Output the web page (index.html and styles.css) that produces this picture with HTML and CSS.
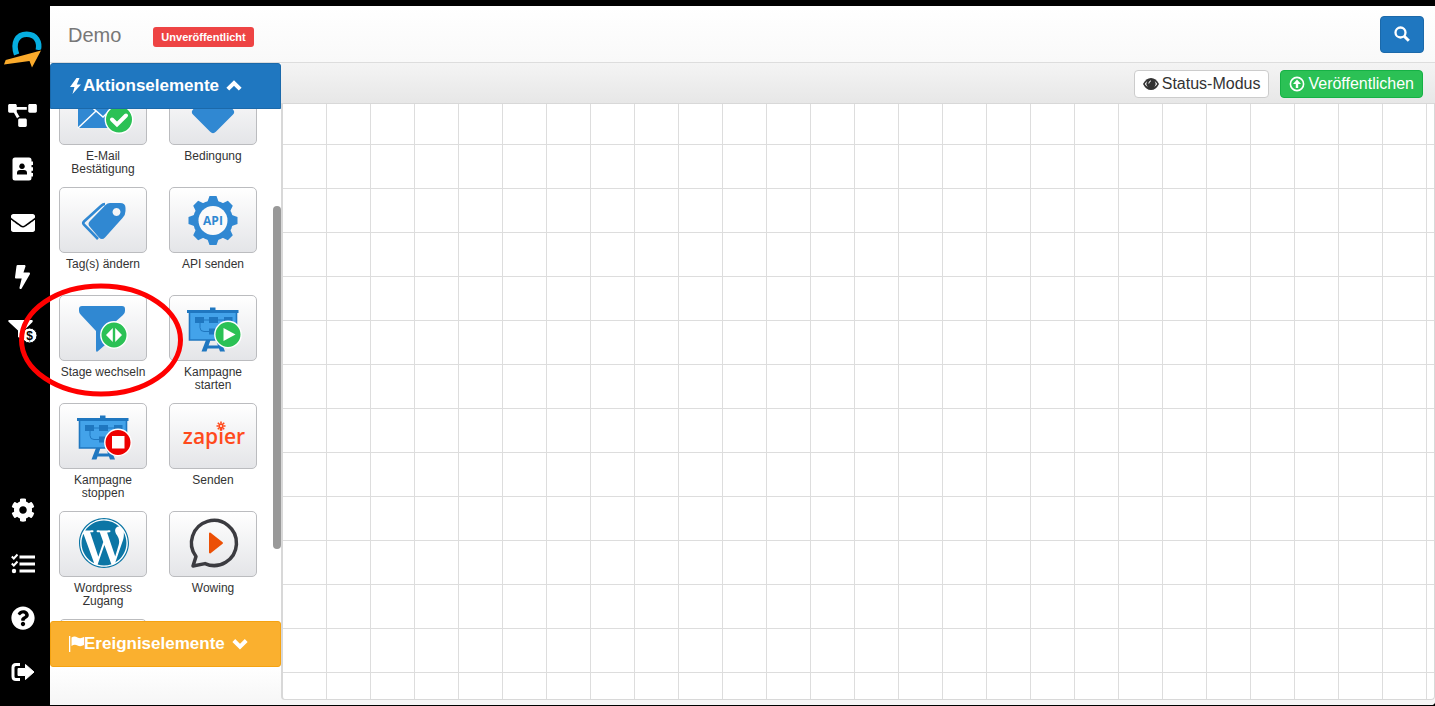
FILE: index.html
```html
<!DOCTYPE html>
<html lang="de">
  <head>
    <meta charset="UTF-8" />
    <meta name="viewport" content="width=device-width, initial-scale=1.0" />
    <title>Demo</title>
    <link rel="stylesheet" href="styles.css">
  </head>

  <body>
    <nav class="sidebar">
      <a class="logo" href="#" aria-label="Startseite">
        <svg width="40" height="40" viewBox="0 0 40 40">
          <path d="M13.600 25.500C9.500 14 14 5.300 23.700 5.300S37 13 35.300 21" fill="none" stroke="#06aee0" stroke-width="5.500" />
          <path d="M1 35.500L2.700 31L38 21.500L29 38.500L26.500 32z" fill="#fbab2c" stroke="#000" stroke-width="2" paint-order="stroke" />
        </svg>
      </a>
      <ul class="nav-list">
        <li><a href="#" aria-label="Kampagnen">
          <svg width="29" height="23" viewBox="0 0 640 512"><path d="M384 320H256c-17.670 0-32 14.330-32 32v128c0 17.670 14.330 32 32 32h128c17.670 0 32-14.330 32-32V352c0-17.670-14.330-32-32-32zM192 32c0-17.670-14.330-32-32-32H32C14.330 0 0 14.330 0 32v128c0 17.670 14.330 32 32 32h95.720l73.160 128.040C211.980 300.980 232.400 288 256 288h.28L192 175.510V128h224V64H192V32zM608 0H480c-17.670 0-32 14.330-32 32v128c0 17.670 14.330 32 32 32h128c17.670 0 32-14.330 32-32V32c0-17.670-14.330-32-32-32z" /></svg>
        </a></li>
        <li><a href="#" aria-label="Kontakte">
          <svg width="24" height="24" viewBox="0 0 24 24">
            <path fill-rule="evenodd" d="M4 .5h14q2.500 0 2.500 2.500v18q0 2.500-2.500 2.500H4q-2.500 0-2.500-2.500V3q0-2.500 2.500-2.500zM11 6.500a2.800 2.800 0 1 0 .01 0zM6 17.500h10v-1.500q0-3-3-3H9q-3 0-3 3z" />
            <path d="M20 4.500h2v3.500h-2zM20 10.200h2v3.500h-2zM20 16h2v3.500h-2z" />
          </svg>
        </a></li>
        <li><a href="#" aria-label="E-Mails">
          <svg width="24" height="24" viewBox="0 0 512 512"><path d="M502.300 190.800c3.900-3.100 9.700-.2 9.700 4.700V400c0 26.500-21.500 48-48 48H48c-26.500 0-48-21.500-48-48V195.600c0-5 5.700-7.800 9.700-4.700 22.400 17.400 52.100 39.500 154.100 113.600 21.100 15.400 56.700 47.800 92.200 47.600 35.700.3 72-32.800 92.300-47.600 102-74.100 131.600-96.300 154-113.700zM256 320c23.200.4 56.600-29.200 73.400-41.400 132.700-96.300 142.800-104.700 173.400-128.700 5.800-4.500 9.200-11.500 9.200-18.900v-19c0-26.500-21.500-48-48-48H48c-26.500 0-48 21.500-48 48v19c0 7.400 3.400 14.300 9.200 18.900 30.600 23.900 40.700 32.400 173.400 128.700 16.800 12.200 50.200 41.800 73.400 41.400z" /></svg>
        </a></li>
        <li><a href="#" aria-label="Automationen">
          <svg width="15" height="24" viewBox="0 0 320 512"><path d="M296 160H180.600l42.600-129.800C227.200 15 215.700 0 200 0H56C44 0 33.800 8.900 32.200 20.800l-32 240C-1.700 275.200 9.500 288 24 288h118.700L96.600 482.500c-3.600 15.200 8 29.500 23.300 29.500 8.400 0 16.400-4.400 20.800-12l176-304c9.300-15.900-2.200-36-20.700-36z" /></svg>
        </a></li>
        <li><a href="#" aria-label="Funnels">
          <svg width="29" height="24" viewBox="0 0 29 24">
            <path d="M1 1h23q1.500.5.500 2L16 11.500V21.500L10 18v-6.500L.3 2.500Q0 1.200 1 1z" />
            <circle cx="21.500" cy="16.500" r="7.500" stroke="#000" />
            <text class="coin" x="21.500" y="21" text-anchor="middle">$</text>
          </svg>
        </a></li>
      </ul>
      <ul class="nav-list nav-bottom">
        <li><a href="#" aria-label="Einstellungen">
          <svg width="24" height="24" viewBox="0 0 512 512"><path d="M487.400 315.700l-42.600-24.600c4.300-23.200 4.300-47 0-70.200l42.600-24.600c4.900-2.800 7.100-8.600 5.500-14-11.100-35.600-30-67.800-54.700-94.600-3.800-4.100-10-5.100-14.800-2.300L380.800 110c-17.900-15.400-38.500-27.300-60.800-35.100V25.800c0-5.600-3.900-10.500-9.400-11.700-36.700-8.200-74.300-7.800-109.200 0-5.500 1.200-9.400 6.100-9.400 11.700V75c-22.200 7.900-42.800 19.800-60.800 35.100L88.700 85.500c-4.900-2.800-11-1.900-14.800 2.300-24.700 26.700-43.600 58.900-54.700 94.600-1.700 5.400.6 11.200 5.500 14L67.300 221c-4.300 23.200-4.300 47 0 70.200l-42.600 24.600c-4.900 2.800-7.100 8.600-5.500 14 11.100 35.600 30 67.800 54.700 94.600 3.800 4.100 10 5.100 14.800 2.300l42.600-24.600c17.900 15.400 38.500 27.300 60.800 35.100v49.200c0 5.600 3.900 10.500 9.400 11.700 36.700 8.200 74.300 7.800 109.200 0 5.500-1.200 9.400-6.100 9.400-11.700v-49.200c22.200-7.900 42.800-19.800 60.800-35.100l42.600 24.600c4.900 2.800 11 1.900 14.800-2.300 24.700-26.700 43.600-58.900 54.700-94.600 1.500-5.500-.7-11.300-5.600-14.100zM256 336c-44.100 0-80-35.900-80-80s35.900-80 80-80 80 35.900 80 80-35.900 80-80 80z" /></svg>
        </a></li>
        <li><a href="#" aria-label="Aufgaben">
          <svg width="24" height="24" viewBox="0 0 24 24">
            <path d="M8.500 3.500H24v3H8.500zM8.500 10.500H24v3H8.500zM8.500 17.500H24v3H8.500z" />
            <circle cx="3" cy="19" r="2.200" />
            <path d="M.8 4.500L2.800 6.500L6.500 2.500M.8 11.500L2.800 13.500L6.500 9.500" fill="none" stroke="#fff" stroke-width="2" />
          </svg>
        </a></li>
        <li><a href="#" aria-label="Hilfe">
          <svg width="24" height="24" viewBox="0 0 512 512"><path d="M504 256c0 136.997-111.043 248-248 248S8 392.997 8 256C8 119.083 119.043 8 256 8s248 111.083 248 248zM262.655 90c-54.497 0-89.255 22.957-116.549 63.758-3.536 5.286-2.353 12.415 2.715 16.258l34.699 26.310c5.205 3.947 12.621 3.008 16.665-2.122 17.864-22.658 30.113-35.797 57.303-35.797 20.429 0 45.698 13.148 45.698 32.958 0 14.976-12.363 22.667-32.534 33.976C247.128 238.528 216 254.941 216 296v4c0 6.627 5.373 12 12 12h56c6.627 0 12-5.373 12-12v-1.333c0-28.462 83.186-29.647 83.186-106.667 0-58.002-60.165-102-116.531-102zM256 338c-25.365 0-46 20.635-46 46 0 25.364 20.635 46 46 46s46-20.636 46-46c0-25.365-20.635-46-46-46z" /></svg>
        </a></li>
        <li><a href="#" aria-label="Abmelden">
          <svg width="24" height="24" viewBox="0 0 24 24">
            <path d="M9 4.500H5Q2 4.500 2 7.500v9q0 3 3 3h4" fill="none" stroke="#fff" stroke-width="3" />
            <path d="M14.500 4.500L23 12L14.500 19.500V15.500H7v-7h7.500z" stroke="#fff" stroke-linejoin="round" />
          </svg>
        </a></li>
      </ul>
    </nav>

    <div class="main">
      <header class="topbar">
        <h1>Demo</h1>
        <span class="badge">Unveröffentlicht</span>
        <button class="btn btn-search" type="button" aria-label="Suchen">
          <svg width="16" height="16" viewBox="0 0 16 16" fill="none" stroke="#fff">
            <circle cx="6.500" cy="6.500" r="5" stroke-width="2.300" />
            <path d="M10 10L14.800 14.800" stroke-width="3" />
          </svg>
        </button>
      </header>

      <div class="workspace">
        <aside class="palette">
          <button class="palette-head head-actions" type="button">
            <svg class="head-icon" width="14" height="16" viewBox="0 0 14 16"><path d="M7.500 0L1 9H5.500L3.500 16L12 6.500H7.800L10.500 0z" /></svg>
            <span>Aktionselemente</span>
            <svg class="head-arrow" width="16" height="16" viewBox="0 0 16 16"><path d="M1.800 11.200L8 5L14.200 11.200" /></svg>
          </button>

          <div class="palette-body">
            <ul class="elements">
              <li>
                <button class="tile" type="button" aria-labelledby="el-mail">
                  <svg viewBox="1 1 86 64">
                    <path d="M19 16h44v33H19z" fill="#3088d2" />
                    <path d="M19 16L44 38L63 20M19 49L37 32" fill="none" stroke="#fff" stroke-width="1.500" />
                    <circle cx="60" cy="40.500" r="13.700" fill="#2bc155" stroke="#fff" stroke-width="1.400" />
                    <path d="M53 40.500L58 45.500L67 36.500" fill="none" stroke="#fff" stroke-width="4" stroke-linecap="round" />
                  </svg>
                </button>
                <span id="el-mail">E-Mail Bestätigung</span>
              </li>
              <li>
                <button class="tile" type="button" aria-labelledby="el-condition">
                  <svg viewBox="1 1 86 64"><rect x="28" y="17" width="32" height="32" rx="4" transform="rotate(45 44 33)" fill="#3088d2" /></svg>
                </button>
                <span id="el-condition">Bedingung</span>
              </li>
              <li>
                <button class="tile" type="button" aria-labelledby="el-tags">
                  <svg viewBox="1 1 86 64" fill="#3088d2">
                    <path d="M46 17Q44 17 42 19L25 34.500q-1.500 1.500 0 3.200L39 52" fill="none" stroke="#3088d2" stroke-width="2.600" />
                    <path fill-rule="evenodd" d="M51 16H61q5.500 0 5.500 5v3q0 4-3 7L46 50.500q-3 3-6 0L31 40q-3-3 0-6L46.500 18q2-2 4.500-2zM57.500 21a4 4 0 1 0 .01 0z" />
                  </svg>
                </button>
                <span id="el-tags">Tag(s) ändern</span>
              </li>
              <li>
                <button class="tile" type="button" aria-labelledby="el-api">
                  <svg viewBox="1 1 86 64" fill="#3088d2">
                    <circle cx="44" cy="33.500" r="20" />
                    <g id="teeth">
                      <path d="M38 16L40.500 9h7L50 16zM38 51L40.500 58h7L50 51z" />
                      <path d="M26.500 27.500L19.500 30v7L26.500 39.500zM61.500 27.500L68.500 30v7L61.500 39.500z" />
                    </g>
                    <use href="#teeth" transform="rotate(45 44 33.500)" />
                    <circle cx="44" cy="33.500" r="14.500" fill="#fafafa" />
                    <text class="api" x="44" y="38" text-anchor="middle">API</text>
                  </svg>
                </button>
                <span id="el-api">API senden</span>
              </li>
              <li>
                <button class="tile" type="button" aria-labelledby="el-stage">
                  <svg viewBox="1 1 86 64">
                    <path d="M23 11H63q3 0 3 3v2q0 2.500-2 4L46 36V50L38.500 56.500Q37 57.500 37 55V36L22 20q-2-1.500-2-4V14q0-3 3-3z" fill="#3088d2" />
                    <circle cx="55" cy="40" r="13.200" fill="#2bc155" stroke="#fff" stroke-width="1.400" />
                    <path d="M53.800 33V47L47 40zM56.200 33V47L63 40z" fill="#fff" />
                  </svg>
                </button>
                <span id="el-stage">Stage wechseln</span>
              </li>
              <li>
                <button class="tile" type="button" aria-labelledby="el-start">
                  <svg viewBox="1 1 86 64">
                    <g id="board">
                      <path d="M37 45H41.500L37.500 56.500H32.500zM47 45H51.500L56 56.500H51zM37 50.500H51V53.500H37z" fill="#1f77c0" />
                      <path d="M20.500 17h47v28h-47z" fill="#43a3ea" stroke="#1f77c0" stroke-width="1.600" />
                      <path d="M18 15h23v-2.500h5.500V15H69.500v3H18z" fill="#1f77c0" />
                      <path d="M26 22h9v6h-9zM40 22h9v6h-9zM55 22h8.500v6H55zM40 33.500h9v6h-9z" fill="#1f77c0" />
                      <path d="M35 25H55M31 28v4.500q0 4 4 4h6" fill="none" stroke="#1f77c0" />
                    </g>
                    <circle cx="59" cy="39.500" r="13.200" fill="#2bc155" stroke="#fff" stroke-width="1.400" />
                    <path d="M54.500 33L66.500 39.500L54.500 46z" fill="#fff" />
                  </svg>
                </button>
                <span id="el-start">Kampagne starten</span>
              </li>
              <li>
                <button class="tile" type="button" aria-labelledby="el-stop">
                  <svg viewBox="1 1 86 64">
                    <use href="#board" />
                    <circle cx="59" cy="39.500" r="13.200" fill="#ee0000" stroke="#fff" stroke-width="1.400" />
                    <path d="M53 33h12.500v12.500H53z" fill="#fff" />
                  </svg>
                </button>
                <span id="el-stop">Kampagne stoppen</span>
              </li>
              <li>
                <button class="tile" type="button" aria-labelledby="el-zapier">
                  <svg viewBox="1 1 86 64">
                    <text class="zapier" x="45" y="41" text-anchor="middle">zapier</text>
                    <path d="M52 18.500v9M47.500 23h9M48.800 19.800l6.400 6.400M55.200 19.800l-6.400 6.400" stroke="#ff4a1c" stroke-width="1.600" />
                    <circle cx="52" cy="23" r="1" fill="#fff" />
                  </svg>
                </button>
                <span id="el-zapier">Senden</span>
              </li>
              <li>
                <button class="tile" type="button" aria-labelledby="el-wordpress">
                  <svg viewBox="1 1 86 64">
                    <circle cx="45" cy="32" r="24" fill="#fff" />
                    <path transform="translate(20 7) scale(2.083)" fill="#0c76a5" d="M21.469 6.825c.84 1.537 1.318 3.300 1.318 5.175 0 3.979-2.156 7.456-5.363 9.325l3.295-9.527c.615-1.540.82-2.771.82-3.864 0-.405-.026-.78-.07-1.110m-7.981.105c.647-.03 1.232-.105 1.232-.105.582-.075.514-.93-.067-.899 0 0-1.755.135-2.880.135-1.064 0-2.850-.15-2.850-.15-.585-.03-.661.855-.075.885 0 0 .54.061 1.125.09l1.680 4.605-2.370 7.080L5.354 6.900c.649-.03 1.234-.1 1.234-.1.585-.075.516-.93-.065-.896 0 0-1.746.138-2.874.138-.2 0-.438-.008-.69-.015C4.911 3.150 8.235 1.215 12 1.215c2.809 0 5.365 1.072 7.286 2.833-.046-.003-.091-.009-.141-.009-1.060 0-1.812.923-1.812 1.914 0 .89.513 1.643 1.060 2.531.411.72.89 1.643.89 2.977 0 .915-.354 1.994-.821 3.479l-1.075 3.585-3.900-11.610.001.014zM12 22.784c-1.059 0-2.081-.153-3.048-.437l3.237-9.406 3.315 9.087c.024.053.05.101.078.149-1.120.393-2.325.609-3.582.609M1.211 12c0-1.564.336-3.050.935-4.390L7.290 21.709C3.694 19.960 1.212 16.271 1.211 12M12 0C5.385 0 0 5.385 0 12s5.385 12 12 12 12-5.385 12-12S18.615 0 12 0m0 .55c6.310 0 11.450 5.140 11.450 11.450S18.310 23.450 12 23.450.55 18.310.55 12 5.690.55 12 .55" fill-rule="evenodd" />
                  </svg>
                </button>
                <span id="el-wordpress">Wordpress Zugang</span>
              </li>
              <li>
                <button class="tile" type="button" aria-labelledby="el-wowing">
                  <svg viewBox="1 1 86 64">
                    <path d="M27 45.500A22.500 22.500 0 1 1 36 52.600L24 55z" fill="none" stroke="#3b3b40" stroke-width="3.500" stroke-linejoin="round" />
                    <path d="M41 22.500L53 32L41 41.500z" fill="#ec5006" stroke="#ec5006" stroke-width="2" stroke-linejoin="round" />
                  </svg>
                </button>
                <span id="el-wowing">Wowing</span>
              </li>
              <li>
                <button class="tile" type="button" aria-label="Weiteres Element"></button>
              </li>
            </ul>
            <div class="scroll-thumb"></div>
          </div>

          <button class="palette-head head-events" type="button">
            <svg class="head-icon" width="15" height="16" viewBox="0 0 15 16"><path d="M0 0h1.300v16H0zM2.500 1.500Q5.500-.5 8.500 1.500Q11.500 3 15 1V9Q11.500 11 8.500 9.500Q5.500 8 2.500 10z" /></svg>
            <span>Ereigniselemente</span>
            <svg class="head-arrow" width="16" height="16" viewBox="0 0 16 16"><path d="M1.800 4.500L8 10.700L14.200 4.500" /></svg>
          </button>
          <div class="palette-foot"></div>
        </aside>

        <main class="editor">
          <div class="toolbar">
            <button class="btn btn-status" type="button">
              <svg width="16" height="14" viewBox="0 0 16 14">
                <path d="M0 7Q3 1 8 1T16 7Q13 13 8 13T0 7z" fill="#333" />
                <path d="M1.800 7Q3 5 4.300 4.200A4.300 4.300 0 0 0 4.800 9.800Q3 9 1.800 7zM14.200 7Q13 5 11.700 4.200A4.300 4.300 0 0 1 11.200 9.800Q13 9 14.200 7z" fill="#fff" />
                <path d="M5.800 6.500Q6 4.200 8 3.800" fill="none" stroke="#fff" />
              </svg>
              Status-Modus
            </button>
            <button class="btn btn-publish" type="button">
              <svg width="16" height="16" viewBox="0 0 16 16">
                <circle cx="8" cy="8" r="6.600" fill="none" stroke="#fff" stroke-width="1.600" />
                <path d="M8 3.500L12 8H9.200V12H6.800V8H4z" fill="#fff" />
              </svg>
              Veröffentlichen
            </button>
          </div>
          <div class="canvas"></div>
        </main>
      </div>
    </div>

    <svg class="marker" width="166" height="116" viewBox="0 0 166 116">
      <ellipse cx="83" cy="58" rx="79.500" ry="54" fill="none" stroke="#ff0000" stroke-width="5" />
    </svg>

    <script>
      const elements = document.querySelector('.elements');
      elements.scrollTop = 38;
    </script>
  </body>
</html>
```

FILE: styles.css
```css
* {
  box-sizing: border-box;
}

body {
  position: relative;
  display: flex;
  height: 100vh;
  margin: 0;
  overflow: hidden;
  background: #000;
  color: #333;
  font-family: "Liberation Sans", Arial, sans-serif;
  font-size: 12px;
}

button {
  font-family: inherit;
  cursor: pointer;
}

ul {
  list-style: none;
  margin: 0;
  padding: 0;
}

svg {
  display: block;
  flex: none;
}

/* sidebar */
.sidebar {
  display: flex;
  flex-direction: column;
  width: 50px;
  flex: none;
  padding: 29px 5px 7px 0;
}

.logo {
  display: block;
  height: 59px;
  padding-left: 3px;
}

.nav-list a {
  display: flex;
  align-items: center;
  justify-content: center;
  height: 54px;
}

.nav-list svg {
  fill: #fff;
}

.nav-bottom {
  margin-top: auto;
}

.coin {
  font-size: 12px;
  font-weight: bold;
  fill: #000;
}

/* header */
.main {
  display: flex;
  flex-direction: column;
  flex: 1;
  min-width: 0;
  margin: 6px 0 1px;
  background: #fff;
  border-radius: 0 0 4px 0;
}

.topbar {
  display: flex;
  align-items: center;
  height: 57px;
  flex: none;
  padding: 0 11px 0 18px;
  background: linear-gradient(#fff, #f9f9f9);
  border-bottom: 1px solid #ddd;
}

h1 {
  margin: 2px 0 0;
  font-size: 20px;
  font-weight: normal;
  color: #777;
}

.badge {
  margin: 6px auto 0 32px;
  padding: 0 8px;
  border-radius: 3px;
  background: #ee4444;
  color: #fff;
  font-size: 11px;
  font-weight: bold;
  line-height: 20px;
}

.btn {
  display: flex;
  align-items: center;
  justify-content: center;
  gap: 3px;
  height: 28px;
  padding: 0 8px;
  border: 1px solid #ccc;
  border-radius: 4px;
  font-size: 16px;
}

.btn-search {
  width: 44px;
  height: 37px;
  background: #1f77c0;
  border-color: #1b69aa;
}

.btn-status {
  background: #fff;
  color: #333;
}

.btn-publish {
  background: #2bc155;
  border-color: #16b145;
  color: #fff;
}

.workspace {
  display: flex;
  flex: 1;
  min-height: 0;
}

/* element palette */
.palette {
  display: flex;
  flex-direction: column;
  width: 231px;
  flex: none;
}

.palette-head {
  display: flex;
  align-items: center;
  height: 46px;
  flex: none;
  padding: 0 18px;
  border: 1px solid;
  border-radius: 3px;
  color: #fff;
  font-size: 17px;
  font-weight: bold;
}

.head-icon {
  fill: #fff;
}

.head-arrow {
  margin-left: 7px;
  fill: none;
  stroke: #fff;
  stroke-width: 4;
}

.head-actions {
  background: #1f77c0;
  border-color: #1b69aa;
  border-radius: 3px 3px 0 0;
}

.head-events {
  background: #fab02f;
  border-color: #f5a311;
}

.palette-body {
  position: relative;
  flex: 1;
  min-height: 0;
}

.elements {
  display: grid;
  grid-template-columns: 88px 88px;
  grid-auto-rows: 108px;
  column-gap: 22px;
  height: 100%;
  padding: 8px 9px;
  overflow-y: scroll;
  scrollbar-width: none;
}

.elements li {
  display: flex;
  flex-direction: column;
  gap: 5px;
  line-height: 13px;
  text-align: center;
}

.tile {
  height: 66px;
  flex: none;
  padding: 0;
  border: 1px solid #bbbcbf;
  border-radius: 5px;
  background: linear-gradient(#fff, #e4e5e8);
}

.api {
  font-family: "Open Sans", sans-serif;
  font-size: 12px;
  font-weight: bold;
}

.zapier {
  font-family: "Open Sans", sans-serif;
  font-size: 21px;
  font-weight: 600;
  fill: #ff4a1c;
}

.scroll-thumb {
  position: absolute;
  top: 19%;
  right: 0;
  width: 8px;
  height: 67%;
  border-radius: 4px;
  background: #999;
}

.palette-foot {
  height: 38px;
  flex: none;
  background: linear-gradient(#fff, #f6f6f6);
}

/* editor */
.editor {
  display: flex;
  flex-direction: column;
  flex: 1;
  min-width: 0;
  padding-bottom: 5px;
  background: #f6f6f6;
  border-radius: 0 0 4px 0;
}

.toolbar {
  display: flex;
  align-items: center;
  justify-content: flex-end;
  gap: 11px;
  height: 41px;
  flex: none;
  padding: 2px 12px 0 0;
  background: linear-gradient(#f4f4f4, #e7e7e7);
  border-bottom: 1px solid #d8d8d8;
}

.canvas {
  flex: 1;
  border: 1px solid #d8d8d8;
  border-width: 0 1px 1px 2px;
  border-radius: 0 0 4px 4px;
  background-color: #fff;
  background-image:
    linear-gradient(to left, #ddd 1px, transparent 1px),
    linear-gradient(to top, #ddd 1px, transparent 1px);
  background-size: 44px 44px;
  background-position: 0 -3px;
}

/* hand-drawn highlight lying over sidebar and palette */
.marker {
  position: absolute;
  top: 282px;
  left: 18px;
  pointer-events: none;
}
```
